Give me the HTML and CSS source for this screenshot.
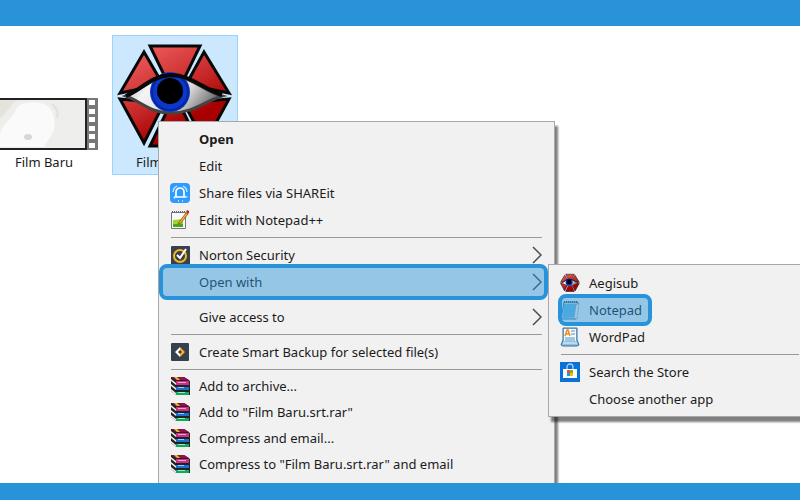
FILE: index.html
```
<!DOCTYPE html>
<html lang="en">
<head>
    <meta charset="UTF-8">
    <meta name="viewport" content="width=device-width, initial-scale=1.0">
    <title>Open with Notepad</title>
    <link rel="stylesheet" href="styles.css">
</head>
<body>
    <!-- Shared icons -->
    <svg class="symbols" aria-hidden="true">
        <defs>
            <linearGradient id="redPane" gradientUnits="userSpaceOnUse" x1="20" y1="0" x2="80" y2="108">
                <stop offset="0" stop-color="#f26262"/>
                <stop offset="0.5" stop-color="#c62727"/>
                <stop offset="0.75" stop-color="#a80000"/>
            </linearGradient>
            <linearGradient id="eyeWhite" x1="0" y1="0" x2="1" y2="0.3">
                <stop offset="0" stop-color="#aaa"/>
                <stop offset="0.3" stop-color="#f4f4f4"/>
                <stop offset="0.7" stop-color="#ddd"/>
                <stop offset="1" stop-color="#777"/>
            </linearGradient>
        </defs>
        <symbol id="aegisub" viewBox="0 0 116 108">
            <g fill="url(#redPane)" stroke="#080808" stroke-width="3">
                <path d="M33 3h50L66 38H50z"/>
                <path d="M27 9L3 50l30-6 12-4z"/>
                <path d="M87 9l25 41-30-6-12-4z"/>
                <path d="M3 56l24 44 17-34-20-8z"/>
                <path d="M112 56l-24 44-18-34 20-8z"/>
                <path d="M33 103h50L66 68H50z"/>
            </g>
            <path d="M9 53C25 47 34 34 54 33c21 0 32 15 51 20-17 5-28 17-51 17C33 70 25 59 9 53z" fill="url(#eyeWhite)" stroke="#444" stroke-width="3"/>
            <circle cx="53" cy="49" r="20" fill="#0b37cf"/>
            <circle cx="53" cy="49" r="18" fill="none" stroke="#0a2795" stroke-width="2"/>
            <circle cx="53" cy="48" r="13" fill="#000"/>
            <path d="M9 53C25 46 34 33 54 32c20 0 32 14 51 20" fill="none" stroke="#080808" stroke-width="4"/>
        </symbol>
        <symbol id="archive" viewBox="0 0 20 20">
            <path d="M1 1h13l6 4v14H6l-5-4z" fill="#222"/>
            <path d="M1 3l5 4v2L1 5zM1 8l5 4v2l-5-4zM1 13l5 4v2l-5-4z" fill="#eee"/>
            <path d="M1 1h13l5 3H6z" fill="#8c1249"/>
            <path d="M6 5h13v4H6z" fill="#d42a86"/>
            <path d="M8 6h8v1H8z" fill="#f6a0d0"/>
            <path d="M6 11h13v3H6z" fill="#1673d4"/>
            <path d="M8 11h6v1H8z" fill="#8fd0ff"/>
            <path d="M6 16h13v3H6z" fill="#12a860"/>
            <path d="M8 16h7v1H8z" fill="#90f0b8"/>
            <path d="M4 1h3l3 3H7z" fill="#d8c320"/>
        </symbol>
        <symbol id="chevron" viewBox="0 0 10 18">
            <path d="M1 1l8 8-8 8" fill="none" stroke="#4a4a55" stroke-width="1.5"/>
        </symbol>
    </svg>

    <header class="bar bar-top"></header>

    <main class="desktop">
        <div class="files">
            <figure class="file">
                <svg class="thumb" viewBox="0 0 108 52">
                    <path d="M0 0h108v52H0z" fill="#777"/>
                    <path d="M0 0h97v52H0z" fill="#222"/>
                    <path d="M0 2h95v48H0z" fill="#eeeeec"/>
                    <path d="M10 36c2-10 12-14 17-26 4-7 24-8 32-1 7 8 7 20 3 27l-8 13H10z" fill="#fafafa"/>
                    <path d="M10 21c8-7 11-16 18-19H10z" fill="#e6e3dd"/>
                    <path d="M62 6c5 5 7 8 5 14" fill="none" stroke="#e3e0da" stroke-width="2"/>
                    <ellipse cx="38" cy="39" rx="4" ry="3" fill="#d6d6d6"/>
                    <path d="M99 2h6v5h-6zM99 11h6v5h-6zM99 19h6v5h-6zM99 28h6v5h-6zM99 36h6v5h-6zM99 45h6v5h-6z" fill="#fff"/>
                </svg>
                <figcaption>Film Baru</figcaption>
            </figure>
            <figure class="file selected">
                <svg class="app-icon"><use href="#aegisub"/></svg>
                <figcaption>Film Baru.srt</figcaption>
            </figure>
        </div>

        <nav class="menu context-menu">
            <button class="item default">Open</button>
            <button class="item">Edit</button>
            <button class="item">
                <svg class="icon" viewBox="0 0 20 20">
                    <rect width="20" height="20" rx="4" fill="#2e9bff"/>
                    <path d="M6 13V9a4 4 0 0 1 8 0v4l1 1H5z" fill="none" stroke="#fff" stroke-width="1.7"/>
                    <path d="M3 9a7 7 0 0 1 4-6M13 3a7 7 0 0 1 4 6M4 15h1M8 18h1M12 18h1M17 13v1" fill="none" stroke="#d5edff" stroke-width="1.3"/>
                </svg>
                Share files via SHAREit
            </button>
            <button class="item">
                <svg class="icon" viewBox="0 0 20 20">
                    <path d="M1.5 2.5h14v16h-14z" fill="#fafafa" stroke="#777"/>
                    <path d="M3 10l10-1v8H3z" fill="#9ad62c"/>
                    <path d="M3 14h10v3H3z" fill="#4ba51f"/>
                    <path d="M2 2h13" stroke="#666" stroke-width="2" stroke-dasharray="1 1"/>
                    <path d="M9 12L16 3l2 1-7 9-3 1z" fill="#f4ad22" stroke="#805014" stroke-width="0.7"/>
                    <path d="M16 2l1-2 2 1v2l-1 1z" fill="#c4202a"/>
                </svg>
                Edit with Notepad++
            </button>
            <hr>
            <button class="item">
                <svg class="icon" viewBox="0 0 20 20">
                    <rect x="1" y="1" width="19" height="19" rx="1" fill="#37414d"/>
                    <circle cx="10" cy="11" r="6" fill="none" stroke="#f7b51c" stroke-width="2"/>
                    <path d="M7 10l3 3 6-9" fill="none" stroke="#fff" stroke-width="2"/>
                </svg>
                Norton Security
                <svg class="arrow"><use href="#chevron"/></svg>
            </button>
            <button class="item marked marked-open">
                Open with
                <svg class="arrow"><use href="#chevron"/></svg>
            </button>
            <button class="item spaced">
                Give access to
                <svg class="arrow"><use href="#chevron"/></svg>
            </button>
            <hr>
            <button class="item">
                <svg class="icon" viewBox="0 0 20 20">
                    <rect x="1" y="1" width="18" height="18" rx="1" fill="#37414d"/>
                    <path d="M10 5l-5 5 5 5v-3L8 10l2-2z" fill="#fff"/>
                    <path d="M10 5l5 5-5 5v-3l2-2-2-2z" fill="#f7b51c"/>
                </svg>
                Create Smart Backup for selected file(s)
            </button>
            <hr>
            <div class="archive-group">
                <button class="item"><svg class="icon"><use href="#archive"/></svg>Add to archive...</button>
                <button class="item"><svg class="icon"><use href="#archive"/></svg>Add to "Film Baru.srt.rar"</button>
                <button class="item"><svg class="icon"><use href="#archive"/></svg>Compress and email...</button>
                <button class="item"><svg class="icon"><use href="#archive"/></svg>Compress to "Film Baru.srt.rar" and email</button>
            </div>
        </nav>

        <nav class="menu submenu">
            <button class="item">
                <svg class="icon"><use href="#aegisub"/></svg>
                Aegisub
            </button>
            <button class="item marked marked-notepad">
                <svg class="icon" viewBox="0 0 20 20">
                    <path d="M4 2h14l-2 17H1z" fill="#a7dcf3" stroke="#4d7f9c"/>
                    <path d="M4 4h13l-1 13-13 1z" fill="#69bce5"/>
                    <path d="M16 5l3-2-2 16-3-1z" fill="#f6f6f6" stroke="#888" stroke-width="0.5"/>
                    <path d="M4 2h14" stroke="#555" stroke-width="2" stroke-dasharray="1 1"/>
                </svg>
                Notepad
            </button>
            <button class="item">
                <svg class="icon" viewBox="0 0 20 20">
                    <path d="M3 1h14v12l2 5-2 1H3l-2-1 2-5z" fill="#8fc2e2" stroke="#346f9c"/>
                    <path d="M4 2h12v12H4z" fill="#f7fbff"/>
                    <path d="M5 9l2-6h1l2 6M6 7h3" fill="none" stroke="#ef8b17" stroke-width="1.5"/>
                    <path d="M11 4h4M11 7h4M5 11h10M5 13h10" stroke="#4b94c7"/>
                    <path d="M3 16h14" stroke="#e6f4fb"/>
                </svg>
                WordPad
            </button>
            <hr>
            <button class="item">
                <svg class="icon" viewBox="0 0 20 20">
                    <path d="M0 0h20v20H0z" fill="#0872d9"/>
                    <path d="M7 7V5a3 3 0 0 1 6 0v2" fill="none" stroke="#a9d5f7" stroke-width="1.3"/>
                    <path d="M3 7h14v9H3z" fill="#fff"/>
                    <path d="M7 8h3v3H7z" fill="#f05023"/>
                    <path d="M10 8h3v3h-3z" fill="#7fba00"/>
                    <path d="M7 11h3v3H7z" fill="#00a4ef"/>
                    <path d="M10 11h3v3h-3z" fill="#ffb900"/>
                </svg>
                Search the Store
            </button>
            <button class="item">Choose another app</button>
        </nav>
    </main>

    <footer class="bar bar-bottom"></footer>
</body>
</html>
```
FILE: styles.css
```
*,
*::after {
    box-sizing: border-box;
}
body {
    display: flex;
    flex-direction: column;
    height: 100vh;
    margin: 0;
    overflow: hidden;
    background: #fff;
    color: #1b1b1b;
    font-family: "Noto Sans", "Open Sans", sans-serif;
    font-size: 13px;
}
.symbols {
    position: absolute;
    width: 0;
    height: 0;
}
.bar {
    flex: none;
    background: #2893d9;
}
.bar-top {
    height: 26px;
}
.bar-bottom {
    height: 17px;
}
.desktop {
    position: relative;
    flex: 1;
    overflow: hidden;
}

/* Files */
.files {
    display: flex;
    gap: 5px;
    margin-left: -19px;
    padding-top: 9px;
}
.file {
    display: flex;
    flex-direction: column;
    align-items: center;
    justify-content: flex-end;
    width: 126px;
    height: 140px;
    margin: 0;
    padding-bottom: 2px;
    border: 1px solid transparent;
}
.file.selected {
    background: #cce8ff;
    border-color: #99d1ff;
}
.file figcaption {
    line-height: 20px;
}
.thumb {
    width: 108px;
    height: 52px;
    margin-bottom: 2px;
}
.app-icon {
    width: 116px;
    height: 108px;
    margin-bottom: 1px;
}

/* Menus */
.menu {
    position: absolute;
    background: #f1f1f1;
    border: 1px solid #a8a8a8;
    box-shadow: 3px 5px 2px rgba(0, 0, 0, 0.5);
}
.context-menu {
    top: 95px;
    left: 158px;
    width: 397px;
    padding: 3px 0 8px;
}
.submenu {
    top: 238px;
    left: 548px;
    width: 264px;
    padding: 4px 0;
}
.item {
    position: relative;
    display: flex;
    align-items: center;
    width: 100%;
    height: 27px;
    padding: 0 12px 0 40px;
    border: none;
    background: none;
    color: inherit;
    font: inherit;
    text-align: left;
    white-space: nowrap;
}
.default {
    font-weight: bold;
}
.spaced {
    margin-top: 8px;
}
.archive-group .item {
    height: 26px;
}
.icon {
    flex: none;
    width: 20px;
    height: 20px;
    margin-left: -29px;
    margin-right: 9px;
}
.arrow {
    width: 10px;
    height: 18px;
    margin-left: auto;
}
.menu hr {
    height: 1px;
    margin: 4px 12px 3px;
    border: none;
    background: #999;
}

/* Highlight boxes over the chosen items */
.marked::after {
    content: "";
    position: absolute;
    z-index: 1;
    border: 4px solid #2893d9;
    border-radius: 8px;
    background: rgba(40, 147, 217, 0.45);
}
.marked-open::after {
    top: -4px;
    bottom: -5px;
    left: 0;
    right: 6px;
}
.marked-notepad::after {
    top: -2px;
    bottom: -3px;
    left: 9px;
    width: 94px;
}
```
